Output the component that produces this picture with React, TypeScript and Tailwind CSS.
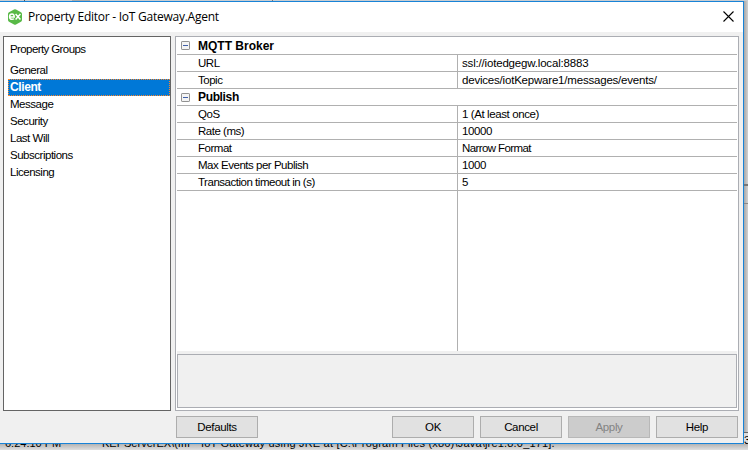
import React from "react";

const groups = ["General", "Client", "Message", "Security", "Last Will", "Subscriptions", "Licensing"];

type Row = { label: string; value?: string; head?: boolean; valueTrack?: string };
const rows: Row[] = [
  { label: "MQTT Broker", head: true },
  { label: "URL", value: "ssl://iotedgegw.local:8883", valueTrack: "tracking-[-0.18px]" },
  { label: "Topic", value: "devices/iotKepware1/messages/events/", valueTrack: "tracking-[-0.2px]" },
  { label: "Publish", head: true },
  { label: "QoS", value: "1 (At least once)" },
  { label: "Rate (ms)", value: "10000" },
  { label: "Format", value: "Narrow Format", valueTrack: "tracking-[-0.6px]" },
  { label: "Max Events per Publish", value: "1000" },
  { label: "Transaction timeout in (s)", value: "5" },
];

function Logo() {
  return (
    <svg width="14" height="16" viewBox="0 0 14 16" className="shrink-0">
      <path d="M6 .6Q7 0 8 .6L13 3.2Q14 3.8 14 5V11Q14 12.2 13 12.8L8 15.4Q7 16 6 15.4L1 12.8Q0 12.2 0 11V5Q0 3.8 1 3.2Z" fill="#58b947" />
      <path d="M1.6 7.9H6.2Q6.2 5 4 5Q1.6 5 1.6 7.7Q1.6 10.3 4.1 10.3Q5.3 10.3 6 9.7M7.6 5L12.4 10.5M12.4 5L7.6 10.5" fill="none" stroke="#fff" strokeWidth="1.5" />
    </svg>
  );
}

function Minus() {
  return (
    <svg width="9" height="9" viewBox="0 0 9 9" className="ml-1 mr-2 shrink-0">
      <rect x=".5" y=".5" width="8" height="8" rx=".6" fill="#f4f4f4" stroke="#919191" />
      <path d="M2 4.5H7" stroke="#4160a8" />
    </svg>
  );
}

function Button({ children, disabled = false }: { children: React.ReactNode; disabled?: boolean }) {
  return (
    <button
      className={`h-[22px] w-[82px] shrink-0 border text-center text-[11.5px] leading-[20px] tracking-[-0.35px] ${
        disabled ? "border-[#b8b8b8] bg-[#cccccc] text-[#838383]" : "border-[#adadad] bg-[#e1e1e1] text-black"
      }`}
    >
      {children}
    </button>
  );
}

export default function App() {
  return (
    <div className="h-[450px] w-[748px] overflow-hidden bg-[#d4d4d4] font-['Liberation_Sans',Arial,sans-serif] text-[11.5px] tracking-[-0.48px] text-black">
      <div className="flex h-px w-full bg-[#c9cdd1]">
        <div className="ml-6 h-px w-px bg-[#555]" />
        <div className="ml-[47px] h-px w-[18px] bg-[#aaa]" />
        <div className="ml-[182px] h-px w-px bg-[#777]" />
      </div>
      <div className="flex h-[443px]">
        <div className="flex w-[744px] flex-col border-y border-r border-[#1883d7] bg-[#f0f0f0]">
          <header className="flex h-[30px] shrink-0 items-center bg-white pl-2 pr-[9px]">
            <Logo />
            <h1 className="ml-1.5 flex-1 font-['Open_Sans','Noto_Sans',sans-serif] text-[12px] leading-[28px] tracking-[-0.25px]">
              Property Editor - IoT Gateway.Agent
            </h1>
            <svg width="11" height="11" viewBox="0 0 11 11" className="mb-[2px]">
              <path d="M.5 .5L10.5 10.5M10.5 .5L.5 10.5" stroke="#000" strokeWidth="1.1" />
            </svg>
          </header>
          <main className="mt-1 flex h-[375px] shrink-0 gap-1 pl-[3px]">
            <aside className="w-[168px] border border-[#646464] bg-white pl-1 pt-[4px]">
              <p className="h-[21px] pl-0.5 leading-[17px] tracking-[-0.6px]">Property Groups</p>
              <ul>
                {groups.map((g) => (
                  <li
                    key={g}
                    className={`h-[17px] ${
                      g === "Client"
                        ? "border border-dotted border-[#ff8728] bg-[#0078d7] pl-px text-[12px] font-bold leading-[15px] tracking-[-0.4px] text-white"
                        : "pl-0.5 leading-[17px]"
                    }`}
                  >
                    {g}
                  </li>
                ))}
              </ul>
            </aside>
            <section className="flex w-[564px] flex-col border border-[#abadb3] bg-white px-px">
              <div className="flex h-[314px] flex-col">
                {rows.map((r) => (
                  <div
                    key={r.label}
                    className={`flex shrink-0 border-b border-[#b0b0b0] ${r.label === "MQTT Broker" ? "h-[18px]" : "h-[17px]"}`}
                  >
                    {r.head ? (
                      <div
                        className={`flex items-center text-[12px] font-bold leading-[16px] ${
                          r.label === "Publish" ? "tracking-[-0.35px]" : "tracking-[0px]"
                        }`}
                      >
                        <Minus />
                        {r.label}
                      </div>
                    ) : (
                      <>
                        <div className="w-[281px] border-r border-[#b0b0b0] pl-[21px] leading-[16px]">{r.label}</div>
                        <div className={`pl-1 leading-[16px] ${r.valueTrack ?? "tracking-[-0.4px]"}`}>{r.value}</div>
                      </>
                    )}
                  </div>
                ))}
                <div className="w-[281px] flex-1 border-r border-[#b0b0b0]" />
              </div>
              <div className="h-[3px] bg-[#f0f0f0]" />
              <div className="h-[54px] border border-[#abadb3] bg-[#f0f0f0]" />
            </section>
          </main>
          <footer className="mt-[5px] flex h-[22px] pl-[176px]">
            <Button>Defaults</Button>
            <div className="w-[134px] shrink-0" />
            <div className="flex gap-[6px]">
              <Button>OK</Button>
              <Button>Cancel</Button>
              <Button disabled>Apply</Button>
              <Button>Help</Button>
            </div>
          </footer>
        </div>
        <div className="flex w-1 flex-col bg-gradient-to-r from-[#a8a8a8] to-[#d2d2d2]">
          <div className="mt-[183px] h-[2px] bg-[#777]" />
          <div className="mt-[17px] h-px bg-[#888]" />
          <div className="mt-[228px] h-px bg-[#666]" />
          <div className="h-[11px] overflow-hidden bg-[#ddd] leading-[14px]">3</div>
        </div>
      </div>
      <div className="flex h-[6px] overflow-hidden bg-gradient-to-b from-[#b4b4b4] to-[#e0e0e0] text-[11px]">
        <span className="-mt-[8px] ml-[5px] w-[97px] shrink-0 leading-[14px] tracking-[0px]">6:24:10 PM</span>
        <span className="-mt-[8px] w-[99px] shrink-0 leading-[14px] tracking-[0px]">KEPServerEX\(IIII</span>
        <span className="-mt-[8px] shrink-0 whitespace-pre leading-[14px] tracking-[0.19px]">IoT Gateway using JRE at [C:\Program Files (x86)\Java\jre1.8.0_171].</span>
      </div>
    </div>
  );
}
